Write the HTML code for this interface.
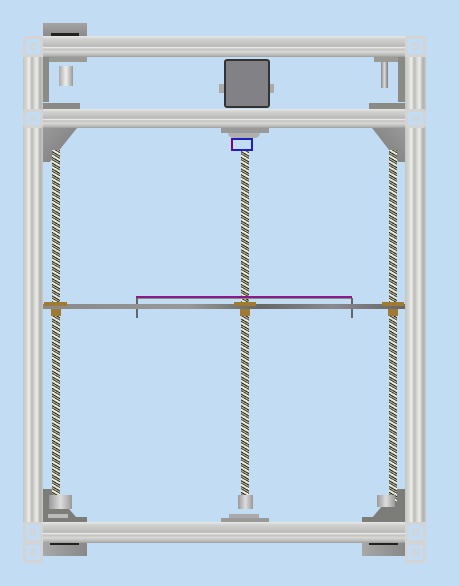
<!DOCTYPE html>
<html><head><style>
body{margin:0;width:459px;height:586px;background:#c2dcf4;position:relative;overflow:hidden;font-family:"Liberation Sans",sans-serif}
div{position:absolute;box-sizing:border-box}
.vpost{background:linear-gradient(90deg,#c4c4c0 0,#d8d8d4 20%,#f0f0ee 30%,#b8b8b4 45%,#d4d4d0 55%,#ececea 70%,#b0b0ac 85%,#c8c8c4 100%)}
.hbar{background:linear-gradient(180deg,#e8e8e6 0,#d0d0ce 15%,#c4c4c2 35%,#b8b8b6 50%,#f4f4f4 55%,#c0c0be 62%,#d8d8d6 75%,#b0b0ae 95%,#999 100%)}
.cube{border:3px solid #d4d4d4;background:#c2dcf4;border-radius:3px}
.cube::before{content:"";position:absolute;left:4px;top:4px;right:4px;bottom:4px;border:2px solid #d4d4d4}
.rod{background:repeating-linear-gradient(30deg,#f0f0e8 0 1px,#444430 1px 2px,#b8b8a0 2px 3px,#2a2a20 3px 4px,#e0e0d0 4px 5px),linear-gradient(90deg,#888,#ddd,#888)}
.gray{background:#8c8c88}
.nut{background:#a07a32}
</style></head><body>
<div style="left:43px;top:23px;width:44px;height:13px;background:linear-gradient(180deg,#a4a4a4,#8a8a8a)"></div>
<div style="left:51px;top:33px;width:28px;height:3px;background:#222"></div>
<div style="left:43px;top:543px;width:44px;height:13px;background:linear-gradient(90deg,#a8a8a8,#888)"></div>
<div style="left:50px;top:543px;width:29px;height:2px;background:#222"></div>
<div style="left:362px;top:543px;width:43px;height:13px;background:linear-gradient(90deg,#a8a8a8,#888)"></div>
<div style="left:369px;top:543px;width:29px;height:2px;background:#222"></div>

<div style="left:43px;top:57px;width:44px;height:5px;background:#9a9a96"></div>
<div style="left:43px;top:57px;width:6px;height:45px;background:#8a8a86"></div>
<div style="left:43px;top:103px;width:37px;height:6px;background:#8a8a86"></div>
<div style="left:59px;top:66px;width:14px;height:20px;background:linear-gradient(90deg,#aaa,#eee,#999)"></div>
<div style="left:374px;top:57px;width:31px;height:5px;background:#9a9a96"></div>
<div style="left:398px;top:57px;width:7px;height:45px;background:#8a8a86"></div>
<div style="left:369px;top:103px;width:36px;height:6px;background:#8a8a86"></div>
<div style="left:381px;top:62px;width:7px;height:26px;background:linear-gradient(90deg,#888,#ddd,#777)"></div>

<div style="left:224px;top:59px;width:46px;height:49px;background:#828286;border-radius:3px;border:2px solid #333"></div>
<div style="left:219px;top:84px;width:5px;height:9px;background:#aaa"></div>
<div style="left:270px;top:84px;width:4px;height:9px;background:#aaa"></div>

<div style="left:43px;top:128px;width:34px;height:34px;background:linear-gradient(135deg,#999 0,#7a7a7a 100%);clip-path:polygon(0 0,100% 0,20% 100%,0 100%)"></div>
<div style="left:372px;top:128px;width:33px;height:34px;background:linear-gradient(225deg,#999,#7a7a7a);clip-path:polygon(0 0,100% 0,100% 100%,80% 100%)"></div>
<div style="left:43px;top:489px;width:44px;height:33px;background:#7c7c78;clip-path:polygon(0 0,20% 0,75% 85%,100% 85%,100% 100%,0 100%)"></div>
<div style="left:362px;top:489px;width:43px;height:33px;background:#7c7c78;clip-path:polygon(80% 0,100% 0,100% 100%,0 100%,0 85%,25% 85%)"></div>

<div class="rod" style="left:52px;top:150px;width:8px;height:352px"></div>
<div class="rod" style="left:241px;top:150px;width:8px;height:352px"></div>
<div class="rod" style="left:389px;top:150px;width:8px;height:352px"></div>

<div style="left:221px;top:128px;width:48px;height:5px;background:#999"></div>
<div style="left:228px;top:133px;width:32px;height:5px;background:#b0b0b0;border-radius:0 0 8px 8px"></div>
<div style="left:231px;top:138px;width:22px;height:13px;border:2px solid #2020c0;border-left-color:#800080"></div>

<div style="left:49px;top:495px;width:23px;height:14px;background:linear-gradient(90deg,#999,#ddd,#999)"></div>
<div style="left:48px;top:514px;width:20px;height:4px;background:#bbb"></div>
<div style="left:238px;top:495px;width:15px;height:14px;background:linear-gradient(90deg,#999,#ddd,#999)"></div>
<div style="left:229px;top:514px;width:30px;height:5px;background:#aaa"></div>
<div style="left:221px;top:518px;width:48px;height:4px;background:#999"></div>
<div style="left:377px;top:495px;width:18px;height:12px;background:linear-gradient(90deg,#999,#ddd,#999)"></div>

<div style="left:136px;top:296px;width:216px;height:2px;background:#8a1a8a"></div>
<div style="left:136px;top:298px;width:216px;height:1px;background:#888"></div>
<div style="left:136px;top:298px;width:2px;height:20px;background:#666"></div>
<div style="left:351px;top:298px;width:2px;height:20px;background:#666"></div>
<div style="left:43px;top:304px;width:362px;height:5px;background:linear-gradient(90deg,#888,#999 40%,#666 60%,#8a8a90 80%,#666)"></div>
<div class="nut" style="left:44px;top:302px;width:23px;height:4px"></div>
<div class="nut" style="left:51px;top:309px;width:10px;height:7px"></div>
<div class="nut" style="left:234px;top:302px;width:22px;height:4px"></div>
<div class="nut" style="left:240px;top:309px;width:10px;height:7px"></div>
<div class="nut" style="left:382px;top:302px;width:22px;height:4px"></div>
<div class="nut" style="left:388px;top:309px;width:10px;height:7px"></div>

<div class="vpost" style="left:23px;top:57px;width:20px;height:465px"></div>
<div class="vpost" style="left:405px;top:57px;width:21px;height:465px"></div>
<div class="hbar" style="left:43px;top:36px;width:362px;height:21px"></div>
<div class="hbar" style="left:43px;top:109px;width:362px;height:19px"></div>
<div class="hbar" style="left:43px;top:522px;width:362px;height:21px"></div>
<div class="cube" style="left:23px;top:36px;width:20px;height:21px"></div>
<div class="cube" style="left:405px;top:36px;width:21px;height:21px"></div>
<div class="cube" style="left:23px;top:109px;width:20px;height:19px"></div>
<div class="cube" style="left:405px;top:109px;width:21px;height:19px"></div>
<div class="cube" style="left:23px;top:522px;width:20px;height:21px"></div>
<div class="cube" style="left:23px;top:542px;width:20px;height:21px"></div>
<div class="cube" style="left:405px;top:522px;width:21px;height:21px"></div>
<div class="cube" style="left:405px;top:542px;width:21px;height:21px"></div>
</body></html>
